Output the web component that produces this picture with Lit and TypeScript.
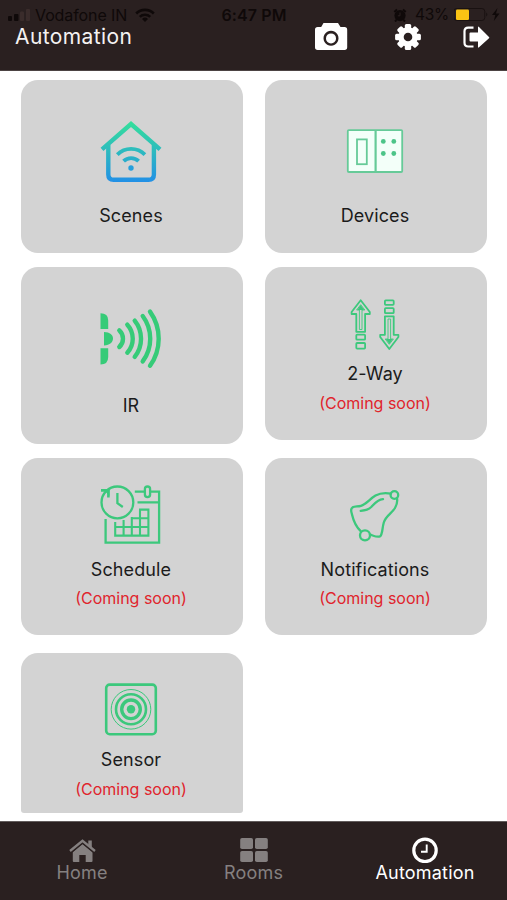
import { LitElement, html, svg, css } from "lit";
import { customElement, property } from "lit/decorators.js";
import { classMap } from "lit/directives/class-map.js";

const GREEN = "#3cc87c";

const scenes = svg`<svg width="70" height="70" viewBox="96 117 70 70" fill="none" stroke="url(#sky)" stroke-width="4.4">
  <defs><linearGradient id="sky" gradientUnits="userSpaceOnUse" x1="131" y1="122" x2="131" y2="182">
    <stop offset="0" stop-color="#35df9b"/><stop offset=".5" stop-color="#2cb9c0"/><stop offset="1" stop-color="#2290e6"/>
  </linearGradient></defs>
  <path d="M102 149.3 131 124l29 25.3"/>
  <path d="M108.3 145v29.5q0 5.3 5.3 5.3h35q5.3 0 5.3-5.3V145"/>
  <path d="M117.3 154.6a19.5 19.5 0 0 1 27.6 0M123.6 161.2a10.5 10.5 0 0 1 15 0" stroke-width="3.8"/>
  <circle cx="131" cy="168" r="2.7" fill="#259fdb" stroke="none"/></svg>`;

const devices = svg`<svg width="70" height="70" viewBox="340 117 70 70" fill="#f3fff9" stroke="#66ca98" stroke-width="1.8">
  <rect x="347.8" y="130.2" width="54.4" height="41.8" rx="1"/>
  <path d="M375.6 130v42" stroke-width="2.2"/><rect x="357" y="139.4" width="9.8" height="24.8"/>
  <g fill="#4cc488" stroke="none"><circle cx="383.3" cy="141.4" r="2.4"/><circle cx="393.8" cy="141.4" r="2.4"/>
  <circle cx="383.3" cy="153.5" r="2.4"/><circle cx="393.8" cy="153.5" r="2.4"/></g></svg>`;

const ir = svg`<svg width="70" height="70" viewBox="96 304 70 70" fill="#36cb78">
  <path d="M100.5 313.3q7.7 0 7.7 7V329h-7.7zM104 332c6 0 9 3 9 6.6s-3 6.8-9 6.8zM100.5 348.2h7.7v8.7q0 7.5-7.7 7.5z"/>
  <g fill="none" stroke="#36cb78" stroke-width="4.4" stroke-linecap="round">
  <path d="M119.3 330.4a11.2 11.2 0 0 1 0 16.6M127.3 324.7a20.7 20.7 0 0 1 0 28M134.7 320.6a29 29 0 0 1 0 36.2M142.7 316a38 38 0 0 1 0 45.4M150 311.6a46.6 46.6 0 0 1 0 54.2"/></g></svg>`;

const twoWay = svg`<svg width="70" height="64" viewBox="340 292 70 64" fill="none" stroke=${GREEN} stroke-width="1.8" stroke-linejoin="round">
  <path d="M360.7 300.2 351.6 312v2h4.7v17.8h8.800V314h4.700v-2z"/>
  <path d="M359.400 329.500v-19.500h-2.800l4.100-5.300 4.100 5.300h-2.800v19.500z" stroke-width=".9"/><path d="m357.200 310 3.500-5 3.500 5z" fill=${GREEN} stroke="none"/>
  <rect x="356.300" y="334.700" width="8.800" height="5" rx=".8"/><rect x="356.300" y="343" width="8.800" height="5.600" rx=".8"/>
  <path d="M389.300 349 380.200 337v-2.200h4.700v-18.500h8.800v18.500h4.700v2.200z"/>
  <path d="M388 319v20h-2.800l4.100 5.300 4.100-5.300h-2.800v-20z" stroke-width=".9"/><path d="m385.800 339 3.500 5 3.500-5z" fill=${GREEN} stroke="none"/>
  <rect x="384.900" y="300.400" width="8.800" height="4.400" rx=".8"/><rect x="384.900" y="308.200" width="8.800" height="5" rx=".8"/></svg>`;

const schedule = svg`<svg width="70" height="68" viewBox="96 482 70 68" fill="none" stroke=${GREEN} stroke-width="2.300">
  <path d="M105.600 519v23.600h53.500v-51h-8.600M144.600 491.600h-9.800M137.500 502.300H159"/>
  <rect x="144.900" y="486.500" width="5.200" height="10.600" rx="2.600"/>
  <circle cx="117.400" cy="502.400" r="15.900"/><path d="M117.400 493v10.200l5.400 3.800"/>
  <path d="M101 490.400h7.400v7" stroke-width="2.600"/><path d="M103 489h6.500v7z" fill=${GREEN} stroke="none"/>
  <path d="M115.200 522v13.600h33.200v-26H139M123.600 520v15.600M131.800 517v18.600M140 509.600v26M131 518.200h17.400M115 527h33.400" stroke-width="2.100"/></svg>`;

const bell = svg`<svg width="70" height="68" viewBox="340 482 70 68" fill="none" stroke=${GREEN} stroke-width="2.300" stroke-linecap="round" stroke-linejoin="round">
  <path d="M391 493.600C386 492.600 380 493 375.500 495.600C369.500 499 366.500 504.300 361 505.800C357.500 506.700 355 506.300 352.500 507.400C350 508.800 351.300 511.500 352 514.500C353.500 521 355.800 526.500 360.700 531.200"/>
  <path d="M370 534.600C373.500 535.600 377 537.600 380 536.400C382.700 534.500 382 528.500 383.800 522.500C386 515.500 391.700 513.500 395 508C397.200 504.200 397.600 501.500 397 498.300"/>
  <path d="M360.700 510.900C364.700 510.500 368.500 509.800 371.500 506.800C375 503 377.500 499.700 383 499.200"/>
  <circle cx="394.400" cy="495" r="3.800"/><circle cx="365" cy="535.300" r="5"/></svg>`;

const sensor = svg`<svg width="70" height="66" viewBox="96 677 70 66" fill="none" stroke=${GREEN}>
  <rect x="106.200" y="684.600" width="49.600" height="49.600" rx="3.500" stroke-width="2.600"/>
  <circle cx="131" cy="709.300" r="4.200" fill=${GREEN} stroke="none"/><circle cx="131" cy="709.300" r="9.300" stroke-width="3.400"/>
  <circle cx="131" cy="709.300" r="15" stroke-width="2.600"/><circle cx="131" cy="709.300" r="19.800" stroke-width="1"/></svg>`;

const camera = svg`<svg width="34" height="30" viewBox="314 21 34 30" fill="#fff">
  <path fill-rule="evenodd" d="M323.500 22h14.500l2.500 4h4q2.700 0 2.700 2.700v17.600q0 2.700-2.700 2.700h-26.800q-2.700 0-2.700-2.700V28.700q0-2.700 2.700-2.700h3.500zM331 29.800a7.500 7.500 0 1 0 .01 0z"/>
  <circle cx="331" cy="37.400" r="5"/></svg>`;

const gear = svg`<svg width="28" height="28" viewBox="-14 -14 28 28">
  <g fill="#fff">${[0, 45, 90, 135].map((a) => svg`<rect x="-3.200" y="-12.900" width="6.400" height="25.800" rx="1.500" transform="rotate(${a})"/>`)}
  <circle r="9.700"/></g><circle r="4.300" fill="#2a2020"/></svg>`;

const logout = svg`<svg width="28" height="26" viewBox="462 23 28 26">
  <path d="M473.500 26.600h-5.300q-3.700 0-3.700 3.700v11.500q0 3.700 3.700 3.700h5.300" fill="none" stroke="#fff" stroke-width="2.200"/>
  <path d="M470.500 31.500h7.500v-5.300q0-1 1-.3l10 10q.7.700 0 1.400l-10 9q-1 .8-1-.3v-5.500h-7.500q-1 0-1-1v-7q0-1 1-1z" fill="#fff"/></svg>`;

const home = svg`<svg width="28" height="26" viewBox="68 837 28 26" fill="currentColor">
  <path d="m82.500 843.800 10 8.200v9q0 1-1 1h-5.800v-7h-6.400v7h-5.500q-1 0-1-1v-9z"/>
  <path d="M70 851.500 82.500 841.200 95 851.500" fill="none" stroke="#2a2020" stroke-width="4.600"/>
  <path d="M70 851 82.500 840.800 95 851" fill="none" stroke="currentColor" stroke-width="2.300"/><path d="M88.300 840.500h3.500v8.300l-3.500-3z"/></svg>`;

const rooms = svg`<svg width="30" height="26" viewBox="239 837 30 26" fill="currentColor">
  <rect x="240.200" y="838" width="12.800" height="11" rx="1.800"/><rect x="255" y="838" width="12.800" height="11" rx="1.800"/>
  <rect x="240.200" y="851" width="12.800" height="11" rx="1.800"/><rect x="255" y="851" width="12.800" height="11" rx="1.800"/></svg>`;

const clock = svg`<svg width="28" height="26" viewBox="411 837 28 26" fill="none" stroke="currentColor">
  <circle cx="425" cy="850.400" r="11.200" stroke-width="3.200"/><path d="M426.700 844.500v7.300H421" stroke-width="1.900"/></svg>`;

@customElement("menu-card")
class MenuCard extends LitElement {
  @property() label = "";
  @property({ type: Boolean }) soon = false;
  @property({ attribute: false }) icon: unknown;
  static styles = css`
    :host { display: flex; flex-direction: column; align-items: center; box-sizing: border-box; width: 222px;
      height: 173px; padding: 37px 2px 0 0; border-radius: 17px; background: #d3d3d3; color: #1b1b1b; }
    svg { display: block; flex: none; }
    .label { margin-top: var(--label-gap, 17px); font-size: 18px; line-height: 24px; letter-spacing: 0.12px; white-space: nowrap; }
    .soon { margin-top: var(--soon-gap, 4px); font-size: 16px; line-height: 24px; color: #e0242c; white-space: nowrap; }
  `;
  render() {
    return html`${this.icon}<div class="label">${this.label}</div>${this.soon ? html`<div class="soon">(Coming soon)</div>` : ""}`;
  }
}

const CARDS = [
  { id: "scenes", label: "Scenes", icon: scenes, soon: false },
  { id: "devices", label: "Devices", icon: devices, soon: false },
  { id: "ir", label: "IR", icon: ir, soon: false },
  { id: "twoway", label: "2-Way", icon: twoWay, soon: true },
  { id: "schedule", label: "Schedule", icon: schedule, soon: true },
  { id: "notifications", label: "Notifications", icon: bell, soon: true },
  { id: "sensor", label: "Sensor", icon: sensor, soon: true },
];
const TABS = [
  { label: "Home", icon: home, active: false },
  { label: "Rooms", icon: rooms, active: false },
  { label: "Automation", icon: clock, active: true },
];

@customElement("app-root")
class AppRoot extends LitElement {
  static styles = css`
    :host { display: flex; flex-direction: column; width: 507px; height: 900px; overflow: hidden; background: #fff;
      font-family: Inter, "Liberation Sans", sans-serif; }
    svg { display: block; flex: none; }
    header { height: 71px; flex: none; box-sizing: border-box; background: #2a2020; border-bottom: 1px solid #4c4343; }
    .status { display: grid; grid-template-columns: 1fr 66px 1fr; align-items: center; height: 22px; padding: 8px 7px 0 8px;
      box-sizing: border-box; color: #0f0909; font-size: 16px; line-height: 14px; white-space: nowrap; }
    .side { display: flex; align-items: center; }
    .carrier { margin-left: 4px; width: 93px; letter-spacing: -0.1px; }
    .wifi { margin-left: 7px; }
    .time { font-weight: 600; font-size: 16px; letter-spacing: 0.1px; text-align: center; }
    .right { justify-content: flex-end; }
    .percent { margin: 0 6px 0 8px; width: 33px; letter-spacing: -0.3px; font-size: 15.5px; }
    .bar { display: flex; align-items: center; height: 30px; padding: 0 17px 0 15px; color: #f4f2f2; }
    .title { flex: 1; font-size: 21px; line-height: 30px; letter-spacing: 0.4px; }
    .cam { margin-right: 46px; }
    .gear { margin-right: 40px; }
    main { height: 742px; flex: none; box-sizing: border-box; padding: 9px 20px 0 21px; overflow: hidden; }
    .grid { display: grid; grid-template-columns: 222px 222px; column-gap: 22px; row-gap: 14px; }
    .ir { height: 177px; --label-gap: 20px; }
    .twoway { padding-top: 25px; --label-gap: 6px; --soon-gap: 5px; }
    .schedule, .notifications { height: 177px; padding-top: 24px; --label-gap: 8px; }
    .sensor { height: 160px; margin-top: 4px; padding-top: 24px; --label-gap: 5px; --soon-gap: 5px; border-radius: 17px 17px 3px 3px; }
    footer { display: flex; justify-content: center; height: 79px; flex: none; box-sizing: border-box; margin-top: 8px; padding-top: 15px;
      border-top: 1px solid #625c5c; background: #2a2020; }
    .tab { display: flex; flex-direction: column; align-items: center; width: 171.5px; flex: none; color: #858080; font-size: 18px;
      line-height: 20px; letter-spacing: 0.2px; }
    .active { color: #fff; }
  `;
  render() {
    return html`
      <header>
        <div class="status">
          <div class="side">
            <svg width="23" height="12" viewBox="0 0 23 12" fill="#0f0909"><rect x="0" y="7" width="4" height="5" rx="1"/><rect x="6" y="5" width="4.500" height="7" rx="1"/><g fill="#3a2c2b"><rect x="12" y="2.500" width="4" height="9.500" rx="1"/><rect x="18" y="0" width="4" height="12" rx="1"/></g></svg>
            <span class="carrier">Vodafone IN</span>
            <svg class="wifi" width="20" height="14" viewBox="0 0 20 14" fill="none" stroke="#0f0909" stroke-width="2.600"><path d="M1.200 5.500a12.500 12.500 0 0 1 17.600 0M4.800 8.900a7.500 7.500 0 0 1 10.400 0"/><path d="M7 11a4.300 4.300 0 0 1 6 0l-3 3z" fill="#0f0909" stroke="none"/></svg>
          </div>
          <div class="time">6:47 PM</div>
          <div class="side right">
            <svg width="14" height="14" viewBox="0 0 14 14"><circle cx="7" cy="7.600" r="5.600" fill="#0f0909"/><path d="M1.300 4 4 1.500M12.700 4 10 1.500M3.500 12 2 13.500M10.500 12l1.500 1.500" stroke="#0f0909" stroke-width="2"/><path d="M7 4.500v3.300H4.800" stroke="#2a2020" stroke-width="1" fill="none"/></svg>
            <span class="percent">43%</span>
            <svg width="46" height="14" viewBox="454 8 46 14"><rect x="453.800" y="8.500" width="31" height="12" rx="3" fill="none" stroke="#191111" stroke-width="1"/><rect x="456" y="9.500" width="13" height="10.500" rx="1.200" fill="#fbc414"/><path d="M486.200 12.500q2.400 2 0 4z" fill="#191111"/><path d="m497.500 8-5.500 7h3.300l-1.500 6 5.700-7.500H496z" fill="#0f0909"/></svg>
          </div>
        </div>
        <div class="bar">
          <span class="title">Automation</span>
          <span class="cam">${camera}</span><span class="gear">${gear}</span>${logout}
        </div>
      </header>
      <main>
        <div class="grid">
          ${CARDS.map((c) => html`<menu-card class=${c.id} .label=${c.label} .icon=${c.icon} .soon=${c.soon}></menu-card>`)}
        </div>
      </main>
      <footer>
        ${TABS.map((t) => html`<div class=${classMap({ tab: true, active: t.active })}>${t.icon}<span>${t.label}</span></div>`)}
      </footer>`;
  }
}
